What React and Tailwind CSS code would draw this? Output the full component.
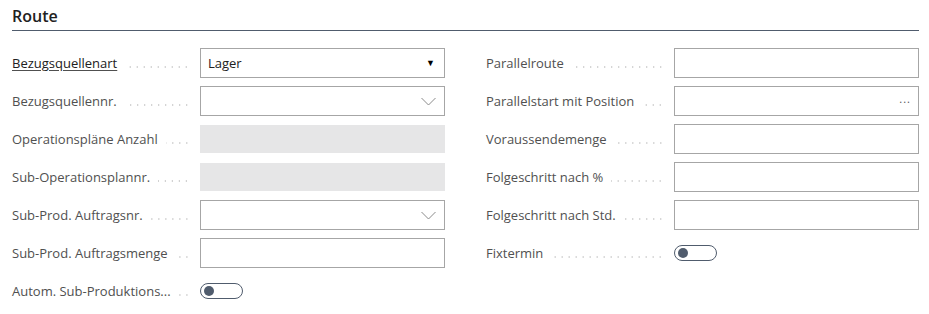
import React from 'react';

const dots = "flex-1 self-center mt-[6px] mx-[8px] h-[2px] bg-[radial-gradient(circle,#c8c8c8_0.8px,transparent_1px)] bg-[length:7px_2px] bg-repeat-x bg-right";

function Label({ text, link }) {
  return (
    <div className="w-[188px] shrink-0 flex items-center pr-[2px] h-full pt-[1px]">
      <span className={link ? "text-[#212121] underline underline-offset-[2px] decoration-[#505050] whitespace-nowrap" : "text-[#505050] whitespace-nowrap"}>
        {text}
      </span>
      <span className={dots} />
    </div>
  );
}

function Input({ kind, value }) {
  if (kind === 'readonly') {
    return <div className="flex-1 h-[28px] my-[1px] bg-[#e6e6e7]" />;
  }
  if (kind === 'toggle') {
    return (
      <div className="flex-1 flex items-center">
        <div className="w-[43px] h-[16px] rounded-full border border-[#505c6d] flex items-center pl-[3px]">
          <div className="w-[10px] h-[10px] rounded-full bg-[#505c6d]" />
        </div>
      </div>
    );
  }
  return (
    <div className="flex-1 h-[30px] border border-[#a6a6a6] flex items-center px-[7px] bg-white">
      <span className="flex-1 text-[#212121] pt-[1px]">{value}</span>
      {kind === 'select' && <span className="text-[9px] text-black mr-[2px]">▼</span>}
      {kind === 'lookup' && (
        <svg width="15" height="9" viewBox="0 0 15 9" className="mr-[1px]">
          <path d="M0.5 1 L7.5 8 L14.5 1" fill="none" stroke="#8a8a8a" strokeWidth="1" />
        </svg>
      )}
      {kind === 'assist' && <span className="text-[#555] tracking-[1px] text-[11px] -mt-[4px]">...</span>}
    </div>
  );
}

function Field({ label, link, kind, value }) {
  return (
    <div className="flex items-center h-[30px]">
      <Label text={label} link={link} />
      <Input kind={kind} value={value} />
    </div>
  );
}

const left = [
  { label: 'Bezugsquellenart', link: true, kind: 'select', value: 'Lager' },
  { label: 'Bezugsquellennr.', kind: 'lookup' },
  { label: 'Operationspläne Anzahl', kind: 'readonly' },
  { label: 'Sub-Operationsplannr.', kind: 'readonly' },
  { label: 'Sub-Prod. Auftragsnr.', kind: 'lookup' },
  { label: 'Sub-Prod. Auftragsmenge', kind: 'text' },
  { label: 'Autom. Sub-Produktions...', kind: 'toggle' },
];

const right = [
  { label: 'Parallelroute', kind: 'text' },
  { label: 'Parallelstart mit Position', kind: 'assist' },
  { label: 'Voraussendemenge', kind: 'text' },
  { label: 'Folgeschritt nach %', kind: 'text' },
  { label: 'Folgeschritt nach Std.', kind: 'text' },
  { label: 'Fixtermin', kind: 'toggle' },
];

export default function App() {
  return (
    <div className="w-[929px] h-[314px] bg-white font-['Open_Sans',sans-serif] text-[13px] overflow-hidden">
      <div className="ml-[12px] pt-[5px] w-[907px]">
        <h2 className="text-[16px] font-semibold text-[#212121] leading-[22px] pb-[3px] border-b border-[#505c6d]">Route</h2>
      </div>
      <div className="flex pl-[12px] pt-[17px] gap-[41px] w-[919px]">
        <div className="flex-1 flex flex-col gap-[8px]">
          {left.map(f => <Field key={f.label} {...f} />)}
        </div>
        <div className="flex-1 flex flex-col gap-[8px]">
          {right.map(f => <Field key={f.label} {...f} />)}
        </div>
      </div>
    </div>
  );
}
